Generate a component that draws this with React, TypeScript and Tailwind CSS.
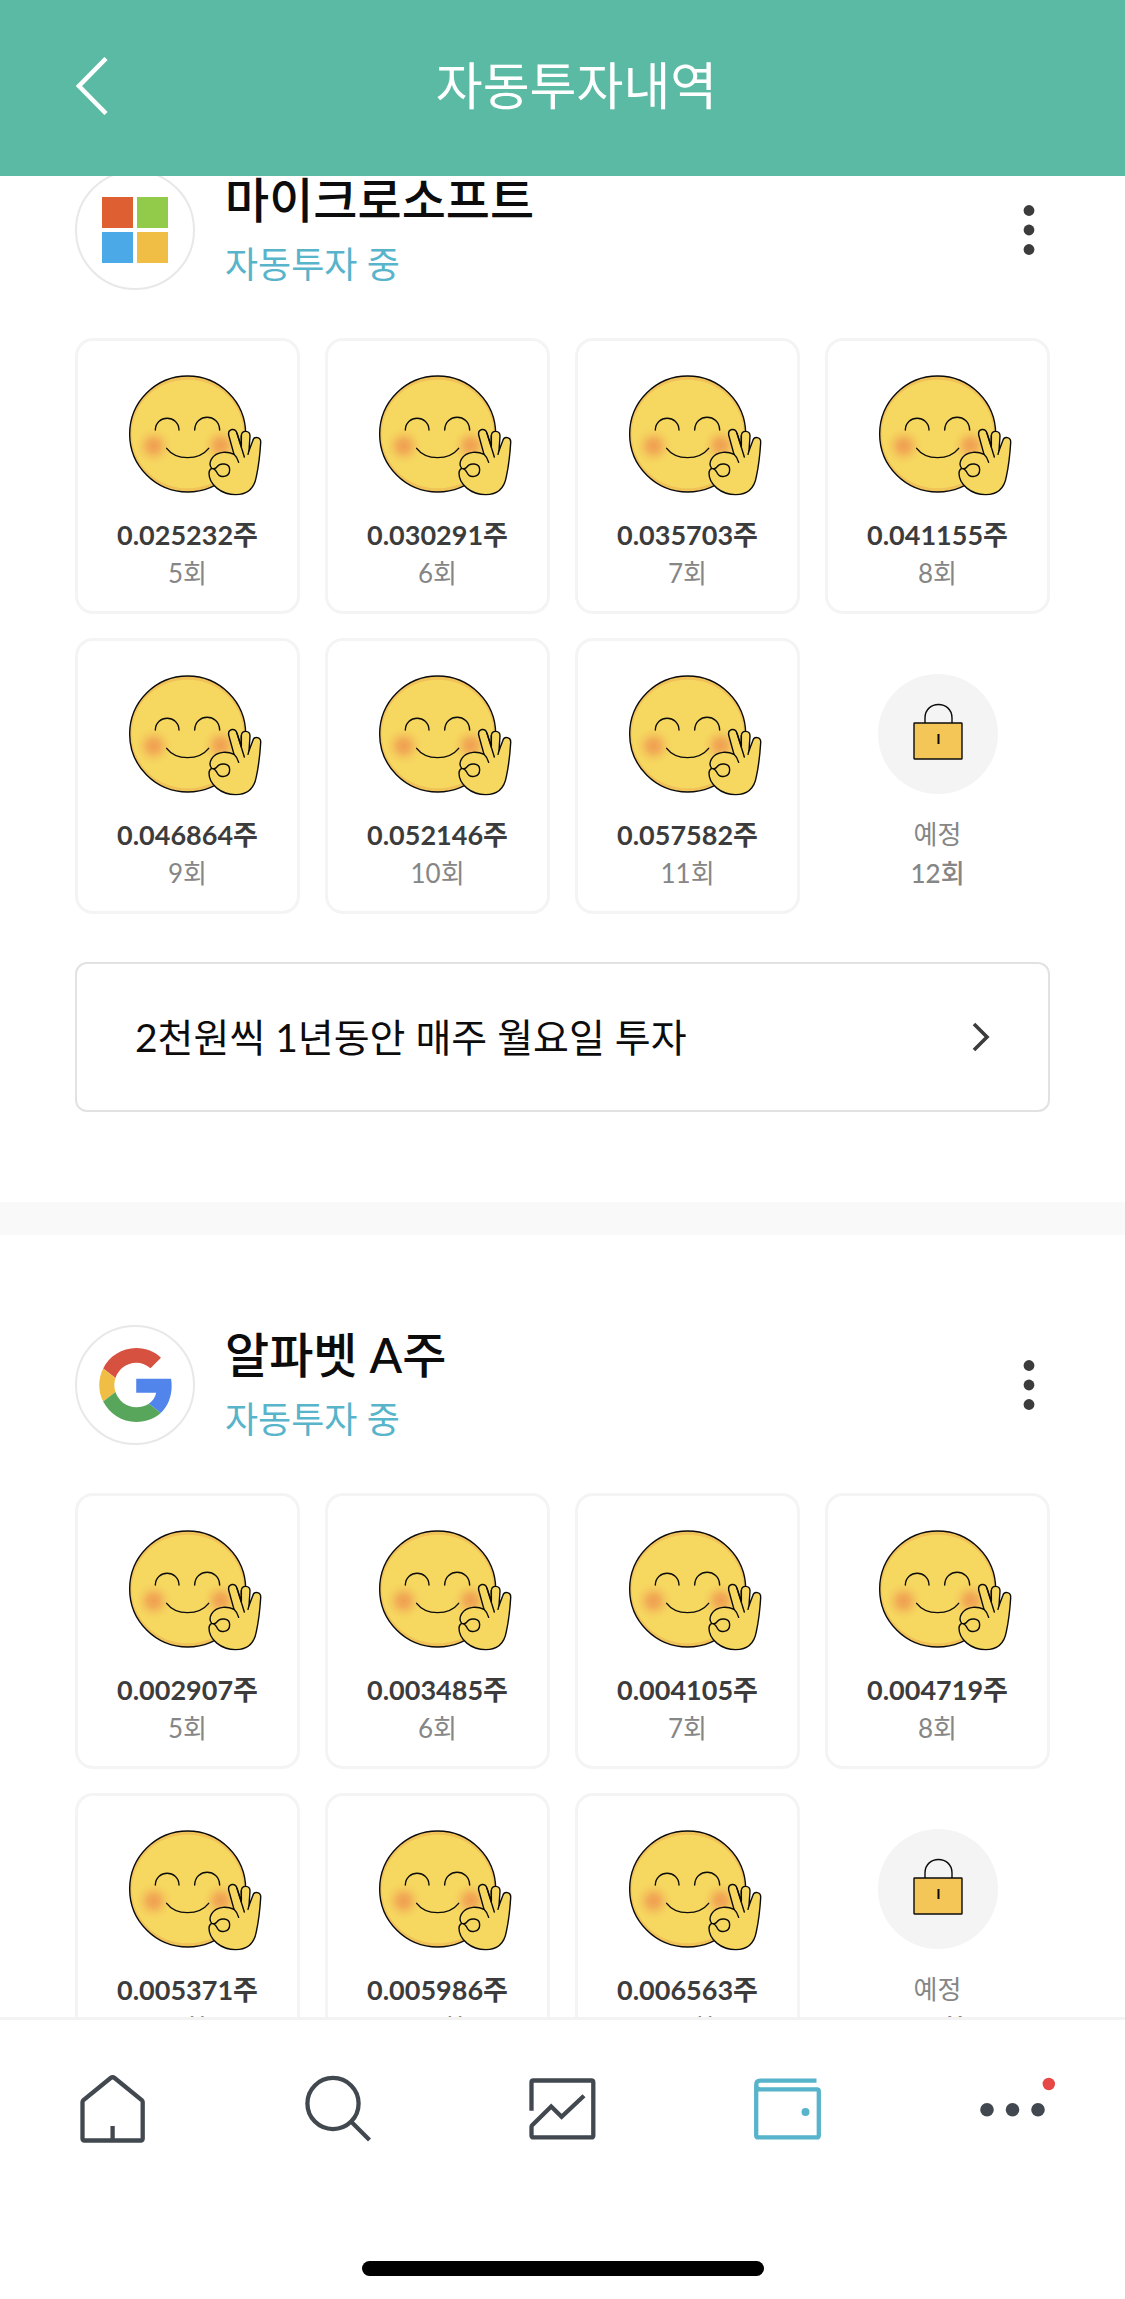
import React from "react";

type Entry = { shares: string; round: number };

type Holding = {
  name: string;
  logo: React.ReactNode;
  entries: Entry[];
  upcoming: number;
  plan: string;
};

function MicrosoftLogo() {
  return (
    <svg viewBox="0 0 66 66" className="size-[66px]" aria-hidden="true">
      <rect x="0" y="0" width="31" height="31" fill="#de5f31" />
      <rect x="35" y="0" width="31" height="31" fill="#92cb4a" />
      <rect x="0" y="35" width="31" height="31" fill="#4ca9e8" />
      <rect x="35" y="35" width="31" height="31" fill="#f0be45" />
    </svg>
  );
}

function GoogleLogo() {
  return (
    <svg viewBox="-0.8 0 48 48" className="size-[74px]" aria-hidden="true">
      <path fill="#d75140" d="M24 9.5c3.54 0 6.71 1.22 9.21 3.6l6.85-6.85C35.9 2.38 30.47 0 24 0 14.62 0 6.51 5.38 2.56 13.22l7.98 6.19C12.43 13.72 17.74 9.5 24 9.5z" />
      <path fill="#5285ec" d="M46.98 24.55c0-1.57-.15-3.09-.38-4.55H24v9.02h12.94c-.58 2.96-2.26 5.48-4.78 7.18l7.73 6c4.51-4.18 7.09-10.36 7.09-17.65z" />
      <path fill="#f0be45" d="M10.53 28.59c-.48-1.45-.76-2.99-.76-4.59s.27-3.14.76-4.59l-7.98-6.19C.92 16.46 0 20.12 0 24c0 3.88.92 7.54 2.56 10.78l7.97-6.19z" />
      <path fill="#58a65c" d="M24 48c6.48 0 11.93-2.13 15.89-5.81l-7.73-6c-2.15 1.45-4.92 2.3-8.16 2.3-6.26 0-11.57-4.22-13.47-9.91l-7.98 6.19C6.51 42.62 14.62 48 24 48z" />
    </svg>
  );
}

function OkFace() {
  return (
    <svg viewBox="129 132 450 366" className="h-[122px] w-[150px]" fill="none" stroke="#0b0b0b" strokeWidth="4.2" strokeLinecap="round" strokeLinejoin="round" aria-hidden="true">
      <defs>
        <radialGradient id="blush">
          <stop offset="0" stopColor="#f0a052" />
          <stop offset="0.3" stopColor="#f0a052" stopOpacity="0.75" />
          <stop offset="0.65" stopColor="#f2b457" stopOpacity="0.3" />
          <stop offset="1" stopColor="#f5d55d" stopOpacity="0" />
        </radialGradient>
      </defs>
      <circle cx="353" cy="312" r="174" fill="#f1c258" />
      <ellipse cx="353" cy="312" rx="168" ry="163" fill="#f6d860" stroke="none" />
      <circle cx="251" cy="348" r="62" fill="url(#blush)" stroke="none" />
      <circle cx="452" cy="346" r="60" fill="url(#blush)" stroke="none" />
      <path d="M256 300C257 253 326 253 327 300M374 300C375 249 448 249 449 300M290 355C318 392 387 392 416 355" />
      <path fill="#f6d860" d="M492 373L476 315C473 297 497 291 501 310L514 350L514 317C515 299 540 300 540 318L537 362L548 333C552 317 574 320 572 339C570 371 567 403 559 440C552 480 528 494 497 494C453 494 417 463 417 430C417 422 419 418 425 415C413 401 425 370 459 367C474 366 484 369 492 373Z" />
      <path d="M492 373Q502 382 506 397M501 310L523 381M514 317L514 350M537 362L534 373M425 415C430 417 434 417 439 413C450 396 479 399 479 419C479 441 449 448 440 426C437 420 433 416 425 415" />
    </svg>
  );
}

function LockBadge() {
  return (
    <span className="flex size-[120px] items-center justify-center rounded-full bg-[#f4f4f4] pb-1">
      <svg viewBox="0 0 52 58" className="h-[58px] w-[52px]" fill="none" stroke="#0b0b0b" strokeWidth="1.4" aria-hidden="true">
        <path d="M13 20V15C13 -3 40 -3 40 15V20" />
        <rect x="2" y="20" width="48" height="36" rx="0.6" fill="#f4c657" />
        <path d="M26.5 31V41" strokeWidth="2" />
      </svg>
    </span>
  );
}

function EntryCard({ shares, round }: Entry) {
  return (
    <li className="flex h-[276px] flex-col items-center rounded-[18px] border-3 border-[#f4f4f4] pt-[33px]">
      <OkFace />
      <p className="mt-[19px] text-[27px] leading-[39px] font-bold whitespace-nowrap text-[#3c3c3c]">{shares}주</p>
      <p className="text-[26px] leading-[39px] text-[#868686]">{round}회</p>
    </li>
  );
}

function HoldingSection({ name, logo, entries, upcoming, plan }: Holding) {
  return (
    <section className="px-[75px] py-[90px]">
      <div className="flex h-[120px] items-center">
        <span className="flex size-[120px] items-center justify-center rounded-full border-2 border-[#e8e8e8] bg-white">{logo}</span>
        <div className="ml-[30px] flex-1 pt-1">
          <h2 className="text-[48px] leading-[64px] font-medium text-[#0c0c0c]">{name}</h2>
          <p className="text-[36px] leading-[64px] text-[#57b4ca]">자동투자 중</p>
        </div>
        <button type="button" aria-label={`${name} 메뉴`} className="flex h-[60px] w-[42px] items-center justify-center">
          <svg viewBox="0 0 12 52" className="h-[52px] w-[12px]" fill="#3c3c3c" aria-hidden="true">
            <circle cx="6" cy="6.5" r="5.4" />
            <circle cx="6" cy="26" r="5.4" />
            <circle cx="6" cy="45.5" r="5.4" />
          </svg>
        </button>
      </div>
      <ul className="mt-[48px] grid grid-cols-4 gap-x-[25px] gap-y-[24px]">
        {entries.map((entry) => (
          <EntryCard key={entry.round} {...entry} />
        ))}
        <li className="flex h-[276px] flex-col items-center pt-[36px] text-[26px] leading-[39px] text-[#868686]">
          <LockBadge />
          <p className="mt-[21px]">예정</p>
          <p className="font-medium">{upcoming}회</p>
        </li>
      </ul>
      <button type="button" className="mt-[48px] flex h-[150px] w-full items-center justify-between rounded-[12px] border-2 border-[#e2e2e2] px-[58px] text-[39px] text-[#0c0c0c]">
        <span>{plan}</span>
        <svg viewBox="0 0 18 30" className="h-[30px] w-[18px]" fill="none" stroke="#3c3c3c" strokeWidth="3.6" aria-hidden="true">
          <path d="M2 2L15 15L2 28" />
        </svg>
      </button>
    </section>
  );
}

const HOLDINGS: Holding[] = [
  {
    name: "마이크로소프트",
    logo: <MicrosoftLogo />,
    entries: [
      { shares: "0.025232", round: 5 },
      { shares: "0.030291", round: 6 },
      { shares: "0.035703", round: 7 },
      { shares: "0.041155", round: 8 },
      { shares: "0.046864", round: 9 },
      { shares: "0.052146", round: 10 },
      { shares: "0.057582", round: 11 },
    ],
    upcoming: 12,
    plan: "2천원씩 1년동안 매주 월요일 투자",
  },
  {
    name: "알파벳 A주",
    logo: <GoogleLogo />,
    entries: [
      { shares: "0.002907", round: 5 },
      { shares: "0.003485", round: 6 },
      { shares: "0.004105", round: 7 },
      { shares: "0.004719", round: 8 },
      { shares: "0.005371", round: 9 },
      { shares: "0.005986", round: 10 },
      { shares: "0.006563", round: 11 },
    ],
    upcoming: 12,
    plan: "2천원씩 1년동안 매주 월요일 투자",
  },
];

const TABS: { label: string; active?: boolean; icon: React.ReactNode }[] = [
  {
    label: "홈",
    icon: <path d="M7.5 66.5Q5.5 66.5 5.5 64.5V28Q5.5 27 6.5 26L33.6 4Q35.6 2.4 37.6 4L64.7 26Q65.7 27 65.7 28V64.5Q65.7 66.5 63.7 66.5ZM35.6 66V52" />,
  },
  {
    label: "검색",
    icon: (
      <>
        <circle cx="31" cy="29.5" r="25.6" />
        <path d="M49.5 48L67.5 66" />
      </>
    ),
  },
  {
    label: "차트",
    icon: <path d="M4.5 36.7V8.5Q4.5 6.5 6.5 6.5H64.3Q66.3 6.5 66.3 8.5V61.4Q66.3 63.4 64.3 63.4H6.5Q4.5 63.4 4.5 61.4V53Q4.5 52 5.2 51.2L24.2 32.5L34.6 42.7L57 21.7" />,
  },
  {
    label: "지갑",
    active: true,
    icon: (
      <>
        <path d="M64.5 6.6H8.2Q4.2 6.6 4.2 10.9Q4.2 15.3 8.2 15.3H64.8Q66.8 15.3 66.8 17.3V61.4Q66.8 63.4 64.8 63.4H6.2Q4.2 63.4 4.2 61.4V10.6" />
        <circle cx="53.5" cy="38" r="4" fill="currentColor" stroke="none" />
      </>
    ),
  },
  {
    label: "더보기",
    icon: (
      <g fill="currentColor" stroke="none">
        <circle cx="10" cy="35.8" r="6.8" />
        <circle cx="35.5" cy="35.8" r="6.8" />
        <circle cx="61" cy="35.8" r="6.8" />
        <circle cx="71.8" cy="10" r="6.2" fill="#e54846" />
      </g>
    ),
  },
];

export default function App() {
  return (
    <div className="flex h-screen flex-col overflow-hidden bg-white font-['Lato','Noto_Sans_CJK_KR',sans-serif]">
      <header className="grid h-[176px] shrink-0 grid-cols-[120px_1fr_92px] items-center bg-[#5abaa3] px-[60px] pb-1 text-white">
        <button type="button" aria-label="뒤로" className="flex h-[84px] w-[64px] items-center justify-center">
          <svg viewBox="0 0 32 58" className="h-[58px] w-[32px]" fill="none" stroke="currentColor" strokeWidth="4.5" aria-hidden="true">
            <path d="M30 1.5L3 29L30 56.5" />
          </svg>
        </button>
        <h1 className="text-center text-[51px] leading-[72px]">자동투자내역</h1>
      </header>

      <main className="min-h-0 flex-1 overflow-hidden">
        <div className="-mt-24 divide-y-33 divide-[#f9f9f9]">
          {HOLDINGS.map((holding) => (
            <HoldingSection key={holding.name} {...holding} />
          ))}
        </div>
      </main>

      <footer className="flex h-[282px] shrink-0 flex-col items-center justify-between border-t-3 border-[#f3f3f3] bg-white pb-[23px]">
        <nav className="grid w-full grid-cols-5 pt-[54px]">
          {TABS.map(({ label, active, icon }) => (
            <a key={label} href="#" aria-label={label} aria-current={active ? "page" : undefined} className={active ? "flex justify-center text-[#57b4ca]" : "flex justify-center text-[#42484f]"}>
              <svg viewBox="0 0 72 72" className="size-[72px] overflow-visible" fill="none" stroke="currentColor" strokeWidth="4.3" aria-hidden="true">
                {icon}
              </svg>
            </a>
          ))}
        </nav>
        <span className="h-[15px] w-[402px] rounded-full bg-black" />
      </footer>
    </div>
  );
}
